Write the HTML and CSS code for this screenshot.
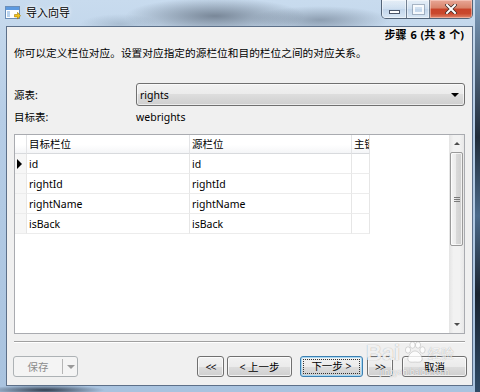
FILE: index.html
```html
<!DOCTYPE html>
<html lang="zh-CN">
<head>
    <meta charset="UTF-8">
    <title>导入向导</title>
    <link rel="stylesheet" href="styles.css">
</head>
<body>
<div class="window">
    <div class="titlebar">
        <svg class="app-icon" width="16" height="15" viewBox="0 0 16 15">
            <rect x="0.5" y="0.5" width="14" height="12" fill="#ffffff" stroke="#6b8fb8"/>
            <rect x="1" y="1" width="13" height="3" fill="#5c9ae0"/>
            <rect x="2" y="5" width="3" height="6" fill="#b9d3ee"/>
            <path d="M9.5 8.5 h3 v-2.2 l3 3.4 -3 3.4 v-2.2 h-3z" fill="#f4c41c" stroke="#a67c00" stroke-width="0.6"/>
        </svg>
        <span class="title">导入向导</span>
        <div class="caption-buttons">
            <div class="cap cap-min"><span class="min-bar"></span></div>
            <div class="cap cap-max"><span class="max-box"></span></div>
            <div class="cap cap-close">
                <svg width="12" height="10" viewBox="0 0 12 10">
                    <path d="M2 1 L10 9 M10 1 L2 9" stroke="#3b2a26" stroke-width="3.4" stroke-linecap="square"/>
                    <path d="M2 1 L10 9 M10 1 L2 9" stroke="#ffffff" stroke-width="2" stroke-linecap="square"/>
                </svg>
            </div>
        </div>
    </div>

    <div class="client">
        <div class="step">步骤 6 (共 8 个)</div>
        <div class="desc">你可以定义栏位对应。设置对应指定的源栏位和目的栏位之间的对应关系。</div>

        <div class="field field-combo">
            <span class="label">源表:</span>
            <div class="combo">
                <span>rights</span>
                <span class="combo-arrow"></span>
            </div>
        </div>
        <div class="field">
            <span class="label">目标表:</span>
            <span class="value">webrights</span>
        </div>

        <div class="grid">
            <div class="grid-body">
                <div class="row head">
                    <div class="cell rowhead"></div>
                    <div class="cell">目标栏位</div>
                    <div class="cell">源栏位</div>
                    <div class="cell">主键</div>
                </div>
                <div class="row">
                    <div class="cell rowhead"><span class="current"></span></div>
                    <div class="cell">id</div>
                    <div class="cell">id</div>
                    <div class="cell"></div>
                </div>
                <div class="row">
                    <div class="cell rowhead"></div>
                    <div class="cell">rightId</div>
                    <div class="cell">rightId</div>
                    <div class="cell"></div>
                </div>
                <div class="row">
                    <div class="cell rowhead"></div>
                    <div class="cell">rightName</div>
                    <div class="cell">rightName</div>
                    <div class="cell"></div>
                </div>
                <div class="row">
                    <div class="cell rowhead"></div>
                    <div class="cell">isBack</div>
                    <div class="cell">isBack</div>
                    <div class="cell"></div>
                </div>
            </div>
            <div class="vscroll">
                <div class="sb-btn"><span class="tri-up"></span></div>
                <div class="sb-thumb"><span class="grip"></span></div>
                <div class="sb-track"></div>
                <div class="sb-btn"><span class="tri-down"></span></div>
            </div>
        </div>

        <div class="separator"></div>

        <div class="footer">
            <div class="split-btn">
                <span class="split-text">保存</span>
                <span class="split-line"></span>
                <span class="split-arrow"></span>
            </div>
            <div class="nav">
                <div class="btn btn-first">&lt;&lt;</div>
                <div class="btn btn-prev">&lt; 上一步</div>
                <div class="btn btn-next"><span class="focus">下一步 &gt;</span></div>
                <div class="btn btn-last">&gt;&gt;</div>
                <div class="btn btn-cancel">取消</div>
            </div>
        </div>
    </div>

    <div class="watermark">
        <span class="wm-bai">Bai</span>
        <svg class="wm-paw" width="24" height="24" viewBox="0 0 24 24">
            <ellipse cx="5" cy="9" rx="2.6" ry="3.2"/>
            <ellipse cx="9.5" cy="4" rx="2.6" ry="3.2"/>
            <ellipse cx="15" cy="4" rx="2.6" ry="3.2"/>
            <ellipse cx="19.5" cy="9" rx="2.6" ry="3.2"/>
            <path d="M12 10 C8 10 4 16 5 19 C6 22 10 21 12 21 C14 21 18 22 19 19 C20 16 16 10 12 10Z"/>
        </svg>
        <span class="wm-jy">经验</span>
        <div class="wm-url">jingyan.baidu.com</div>
    </div>
</div>
</body>
</html>
```

FILE: styles.css
```css
body {
    margin: 0;
    font-family: "Noto Sans", "Noto Sans CJK SC", sans-serif;
    font-size: 10.5px;
    line-height: 14px;
    color: #000;
}
.window {
    position: relative;
    width: 480px;
    height: 392px;
    overflow: hidden;
    background:
        linear-gradient(to bottom, #7d9cbc, #202c3a 35%, #4b6a8a 55%, #1a2430 75%, #2f4a66) right top / 5px 100% no-repeat,
        radial-gradient(ellipse 60px 5px at 45px 390px, rgba(20, 30, 45, 0.8), transparent) no-repeat,
        radial-gradient(ellipse 90px 18px at 215px 16px, rgba(95, 108, 124, 0.75), transparent) no-repeat,
        radial-gradient(ellipse 70px 14px at 320px 20px, rgba(105, 120, 138, 0.6), transparent) no-repeat,
        radial-gradient(ellipse 40px 10px at 120px 24px, rgba(120, 140, 160, 0.35), transparent) no-repeat,
        linear-gradient(to bottom, #c8dbee, #b6cde6 30%, #a9c3df);
}

/* title bar */
.titlebar {
    height: 26px;
    display: flex;
    align-items: center;
    padding-left: 5px;
}
.app-icon {
    display: block;
}
.title {
    margin-left: 5px;
    font-size: 11px;
    text-shadow: 0 0 5px #fff, 0 0 3px #fff;
}
.caption-buttons {
    margin-left: auto;
    margin-right: 7px;
    align-self: flex-start;
    display: flex;
    height: 18px;
    border: 1px solid rgba(45, 60, 80, 0.75);
    border-top: none;
    border-radius: 0 0 5px 5px;
    overflow: hidden;
}
.cap {
    height: 18px;
    display: flex;
    align-items: center;
    justify-content: center;
    background: linear-gradient(to bottom, rgba(255, 255, 255, 0.55), rgba(220, 232, 245, 0.35) 50%, rgba(180, 200, 225, 0.3) 50%, rgba(230, 240, 250, 0.6));
    box-shadow: inset 0 0 0 1px rgba(255, 255, 255, 0.45);
}
.cap-min {
    width: 24px;
    border-right: 1px solid rgba(45, 60, 80, 0.6);
}
.cap-max {
    width: 22px;
    border-right: 1px solid rgba(45, 60, 80, 0.6);
}
.cap-close {
    width: 42px;
    background: linear-gradient(to bottom, #e8a797, #d88269 45%, #c8432a 50%, #c9482d 75%, #e0866b);
    box-shadow: inset 0 0 0 1px rgba(255, 220, 210, 0.5);
}
.min-bar {
    width: 9px;
    height: 2px;
    margin-top: 6px;
    background: #fff;
    border: 1px solid #4a5568;
}
.max-box {
    width: 7px;
    height: 5px;
    border: 2px solid rgba(255, 255, 255, 0.8);
    outline: 1px solid rgba(90, 105, 125, 0.4);
}

/* client area */
.client {
    margin: 0 7px 0 6px;
    height: 360px;
    box-sizing: border-box;
    border: 1px solid #5d7089;
    background: #f0f0f0;
    padding: 0 7px;
}
.step {
    margin-top: 1px;
    text-align: right;
    font-weight: bold;
    font-size: 11px;
    word-spacing: 1px;
    padding-right: 1px;
}
.desc {
    margin-top: 4px;
    font-size: 10.7px;
}
.field {
    display: flex;
    align-items: center;
    margin-top: 4px;
    height: 14px;
}
.field-combo {
    margin-top: 23px;
    height: 23px;
}
.label {
    width: 122px;
    flex: none;
}
.combo {
    flex: 1;
    height: 23px;
    box-sizing: border-box;
    border: 1px solid #707070;
    border-radius: 3px;
    background: linear-gradient(to bottom, #f2f2f2, #ebebeb 50%, #dddddd 50%, #cfcfcf);
    box-shadow: inset 0 0 0 1px rgba(255, 255, 255, 0.6);
    display: flex;
    align-items: center;
    justify-content: space-between;
    padding: 0 5px 0 3px;
}
.combo-arrow {
    width: 0;
    height: 0;
    border-left: 4px solid transparent;
    border-right: 4px solid transparent;
    border-top: 4px solid #000;
}

/* data grid */
.grid {
    margin-top: 10px;
    height: 200px;
    box-sizing: border-box;
    border: 1px solid #a9abb0;
    background: #fff;
    display: flex;
}
.grid-body {
    flex: 1;
    overflow: hidden;
}
.row {
    display: grid;
    grid-template-columns: 12px 163px 162px 18px;
    height: 20px;
}
.row.head {
    height: 19px;
}
.cell {
    box-sizing: border-box;
    border-right: 1px solid #e6e6e6;
    border-bottom: 1px solid #ececec;
    padding-left: 2px;
    white-space: nowrap;
    overflow: hidden;
    display: flex;
    align-items: center;
}
.head .cell {
    background: linear-gradient(to bottom, #ffffff, #ffffff 55%, #f4f5f7);
    border-bottom-color: #d8dadd;
    border-right-color: #e3e4e6;
}
.rowhead {
    padding-left: 0;
    background: #f6f6f6;
    justify-content: center;
}
.current {
    width: 0;
    height: 0;
    border-top: 5px solid transparent;
    border-bottom: 5px solid transparent;
    border-left: 5px solid #000;
    margin-left: -2px;
}

/* scrollbar */
.vscroll {
    width: 15px;
    display: flex;
    flex-direction: column;
    background: linear-gradient(to right, #e4e4e4, #f2f2f2 30%, #f2f2f2 70%, #e8e8e8);
}
.sb-btn {
    height: 17px;
    display: flex;
    align-items: center;
    justify-content: center;
}
.tri-up {
    width: 0;
    height: 0;
    border-left: 3px solid transparent;
    border-right: 3px solid transparent;
    border-bottom: 3px solid #4d4d4d;
}
.tri-down {
    width: 0;
    height: 0;
    border-left: 3px solid transparent;
    border-right: 3px solid transparent;
    border-top: 3px solid #4d4d4d;
}
.sb-thumb {
    height: 94px;
    margin: 0 1px;
    box-sizing: border-box;
    border: 1px solid #9a9a9a;
    border-radius: 2px;
    background: linear-gradient(to right, #f4f4f4, #ebebeb 50%, #d9d9d9 50%, #cfcfcf);
    box-shadow: inset 0 0 0 1px rgba(255, 255, 255, 0.7);
    display: flex;
    align-items: center;
    justify-content: center;
}
.grip {
    width: 6px;
    height: 5px;
    background: linear-gradient(to bottom, #7a7a7a 1px, transparent 1px, transparent 2px, #7a7a7a 2px, #7a7a7a 3px, transparent 3px, transparent 4px, #7a7a7a 4px);
}
.sb-track {
    flex: 1;
}

.separator {
    margin-top: 7px;
    border-top: 1px solid #a0a0a0;
    border-bottom: 1px solid #ffffff;
}

/* buttons */
.footer {
    display: flex;
    margin-top: 13px;
    height: 21px;
}
.split-btn {
    margin-left: -1px;
    width: 65px;
    box-sizing: border-box;
    border: 1px solid #adb2b5;
    border-radius: 3px;
    background: #f4f4f4;
    display: flex;
    align-items: center;
    color: #8c8c8c;
}
.split-text {
    width: 48px;
    text-align: center;
}
.split-line {
    width: 1px;
    height: 15px;
    background: #b5b5b5;
}
.split-arrow {
    margin-left: 4px;
    width: 0;
    height: 0;
    border-left: 4px solid transparent;
    border-right: 4px solid transparent;
    border-top: 4px solid #9a9a9a;
}
.nav {
    margin-left: auto;
    margin-right: -2px;
    display: flex;
}
.btn {
    height: 21px;
    box-sizing: border-box;
    border: 1px solid #707070;
    border-radius: 3px;
    background: linear-gradient(to bottom, #f2f2f2, #ebebeb 50%, #dddddd 50%, #cfcfcf);
    box-shadow: inset 0 0 0 1px rgba(255, 255, 255, 0.7);
    display: flex;
    align-items: center;
    justify-content: center;
    white-space: nowrap;
}
.btn-first {
    width: 27px;
    letter-spacing: -1px;
}
.btn-prev {
    width: 65px;
    margin-left: 3px;
}
.btn-next {
    width: 63px;
    margin-left: 8px;
    border-color: #3c7fb1;
    box-shadow: inset 0 0 0 1px #a6d8f4;
}
.btn-last {
    width: 26px;
    margin-left: 4px;
    letter-spacing: -1px;
}
.btn-cancel {
    width: 65px;
    margin-left: 9px;
}
.focus {
    padding: 0 7px;
    line-height: 13px;
    outline: 1px dotted #333;
}

/* watermark over the buttons */
.watermark {
    position: absolute;
    left: 366px;
    top: 339px;
    width: 100px;
    color: rgba(255, 255, 255, 0.85);
    text-shadow: 0 0 1px rgba(60, 60, 60, 0.45);
    pointer-events: none;
}
.wm-bai {
    font-family: "Liberation Sans", sans-serif;
    font-size: 22px;
    font-weight: bold;
    line-height: 28px;
    vertical-align: top;
}
.wm-paw {
    vertical-align: top;
    margin-top: 2px;
    fill: rgba(255, 255, 255, 0.8);
    stroke: rgba(80, 80, 80, 0.35);
    stroke-width: 0.6;
}
.wm-jy {
    font-size: 13px;
    line-height: 28px;
    vertical-align: top;
    margin-left: -2px;
}
.wm-url {
    margin-left: 14px;
    font-size: 8px;
    line-height: 10px;
}
```
